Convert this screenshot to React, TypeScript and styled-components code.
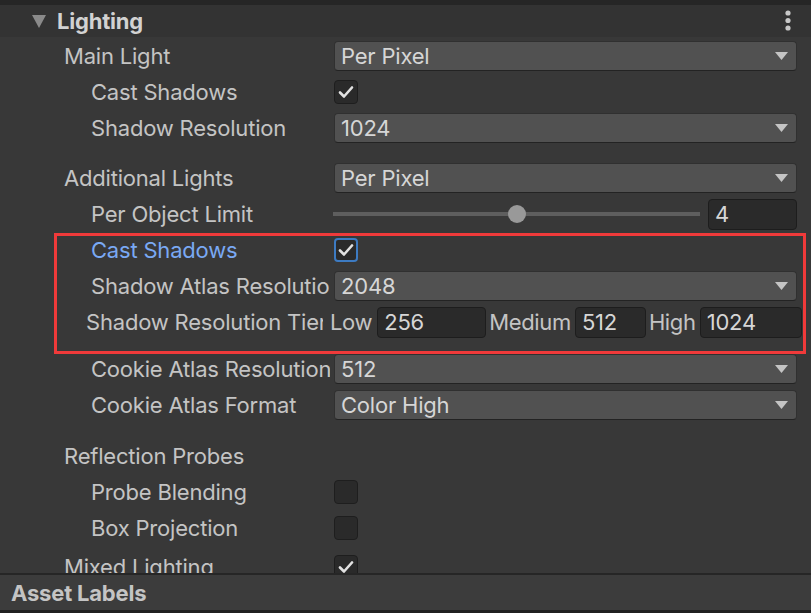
import styled, { createGlobalStyle } from 'styled-components';

const GlobalStyle = createGlobalStyle`
  html, body {
    margin: 0;
    padding: 0;
    background: #383838;
  }
  body {
    font-family: Inter, 'Noto Sans', sans-serif;
    letter-spacing: -0.2px;
    color: #c4c4c4;
  }
  * {
    box-sizing: border-box;
  }
`;

const Inspector = styled.div`
  width: 811px;
  height: 613px;
  display: flex;
  flex-direction: column;
  overflow: hidden;
  background: #383838;
`;

const TopBand = styled.div`
  height: 5px;
  flex-shrink: 0;
  background: #262626;
`;

const Header = styled.div`
  height: 32px;
  flex-shrink: 0;
  display: flex;
  align-items: center;
  gap: 11px;
  padding: 0 20px 0 32px;
  background: #333333;
`;

const HeaderTitle = styled.div`
  flex: 1;
  font-size: 22px;
  font-weight: 700;
  color: #d2d2d2;
`;

const Body = styled.div`
  flex: 1;
  overflow: hidden;
  padding-top: 1px;
`;

const Row = styled.div`
  display: grid;
  grid-template-columns: 330px 1fr;
  column-gap: 4px;
  align-items: center;
  height: 36px;
  padding-right: 14px;
`;

const Label = styled.div<{ $indent: number; $active?: boolean }>`
  padding-left: ${(p) => p.$indent}px;
  font-size: 22px;
  white-space: nowrap;
  overflow: hidden;
  color: ${(p) => (p.$active ? '#7aa9f4' : '#c4c4c4')};
`;

const Spacer = styled.div<{ $h: number }>`
  height: ${(p) => p.$h}px;
`;

const Dropdown = styled.div`
  height: 30px;
  display: flex;
  align-items: center;
  justify-content: space-between;
  padding: 0 8px 0 6px;
  background: #515151;
  border: 1px solid #303030;
  border-bottom-color: #232323;
  border-radius: 4px;
  font-size: 22px;
  color: #d6d6d6;
`;

const CheckBox = styled.div<{ $focused?: boolean }>`
  width: 24px;
  height: 24px;
  display: flex;
  align-items: center;
  justify-content: center;
  background: #2a2a2a;
  border: ${(p) => (p.$focused ? '2px solid #3d7bc2' : '1px solid #1e1e1e')};
  border-radius: 4px;
`;

const SliderField = styled.div`
  display: flex;
  align-items: center;
  gap: 8px;
  margin-left: -1px;
`;

const Track = styled.div`
  position: relative;
  flex: 1;
  height: 4px;
  background: #5e5e5e;
`;

const Thumb = styled.div`
  position: absolute;
  top: -7px;
  width: 18px;
  height: 18px;
  border-radius: 50%;
  background: #999999;
`;

const NumberField = styled.div<{ $w?: number }>`
  ${(p) => (p.$w ? `width: ${p.$w}px; flex-shrink: 0;` : 'flex: 1;')}
  height: 31px;
  display: flex;
  align-items: center;
  padding-left: 6px;
  background: #2a2a2a;
  border: 1px solid #1d1d1d;
  border-radius: 4px;
  font-size: 22px;
  color: #d6d6d6;
`;

const TierRow = styled.div`
  display: flex;
  align-items: center;
  height: 36px;
  padding: 0 9px 0 86px;
`;

const TierLabel = styled.div`
  width: 237px;
  flex-shrink: 0;
  font-size: 22px;
  white-space: nowrap;
  overflow: hidden;
`;

const MiniLabel = styled.div<{ $left: number; $right: number }>`
  flex-shrink: 0;
  margin: 0 ${(p) => p.$right}px 0 ${(p) => p.$left}px;
  font-size: 22px;
  letter-spacing: -0.35px;
  white-space: nowrap;
`;

const Highlight = styled.div`
  position: relative;
  padding-bottom: 11px;

  &::after {
    content: '';
    position: absolute;
    left: 54px;
    right: 5px;
    top: 1px;
    bottom: -3px;
    border: 3px solid #f03a3a;
    pointer-events: none;
  }
`;

const Footer = styled.div`
  height: 40px;
  flex-shrink: 0;
  display: flex;
  align-items: center;
  padding-left: 11px;
  background: #3c3c3c;
  border-top: 2px solid #262626;
  border-bottom: 3px solid #202020;
  font-size: 22px;
  font-weight: 700;
  color: #c4c4c4;
`;

const Arrow = () => (
  <svg width="13" height="8" viewBox="0 0 13 8">
    <polygon points="0,0 13,0 6.5,8" fill="#c4c4c4" />
  </svg>
);

const Check = () => (
  <svg width="16" height="14" viewBox="0 0 16 14">
    <polyline
      points="2,7.5 6,11.5 14,2.5"
      fill="none"
      stroke="#e2e2e2"
      strokeWidth="2.6"
      strokeLinecap="round"
      strokeLinejoin="round"
    />
  </svg>
);

const FoldTriangle = () => (
  <svg width="14" height="14" viewBox="0 0 14 14">
    <polygon points="0,1 14,1 7,14" fill="#8a8a8a" />
  </svg>
);

const MenuDots = () => (
  <svg width="6" height="22" viewBox="0 0 6 22">
    <circle cx="3" cy="3" r="2.6" fill="#c8c8c8" />
    <circle cx="3" cy="10.5" r="2.6" fill="#c8c8c8" />
    <circle cx="3" cy="18" r="2.6" fill="#c8c8c8" />
  </svg>
);

const Select = ({ value }: { value: string }) => (
  <Dropdown>
    <span>{value}</span>
    <Arrow />
  </Dropdown>
);

const Toggle = ({ on, focused }: { on: boolean; focused?: boolean }) => (
  <div>
    <CheckBox $focused={focused}>{on && <Check />}</CheckBox>
  </div>
);

const objectLimit = { value: 4, min: 0, max: 8 };

export default function App() {
  const pct = ((objectLimit.value - objectLimit.min) / (objectLimit.max - objectLimit.min)) * 100;

  return (
    <>
      <GlobalStyle />
      <Inspector>
        <TopBand />
        <Header>
          <FoldTriangle />
          <HeaderTitle>Lighting</HeaderTitle>
          <MenuDots />
        </Header>
        <Body>
          <Row>
            <Label $indent={64}>Main Light</Label>
            <Select value="Per Pixel" />
          </Row>
          <Row>
            <Label $indent={91}>Cast Shadows</Label>
            <Toggle on />
          </Row>
          <Row>
            <Label $indent={91}>Shadow Resolution</Label>
            <Select value="1024" />
          </Row>
          <Spacer $h={14} />
          <Row>
            <Label $indent={64}>Additional Lights</Label>
            <Select value="Per Pixel" />
          </Row>
          <Row>
            <Label $indent={91}>Per Object Limit</Label>
            <SliderField>
              <Track>
                <Thumb style={{ left: `calc(${pct}% - 9px)` }} />
              </Track>
              <NumberField $w={89}>{objectLimit.value}</NumberField>
            </SliderField>
          </Row>
          <Highlight>
            <Row>
              <Label $indent={91} $active>
                Cast Shadows
              </Label>
              <Toggle on focused />
            </Row>
            <Row>
              <Label $indent={91}>Shadow Atlas Resolution</Label>
              <Select value="2048" />
            </Row>
            <TierRow>
              <TierLabel>Shadow Resolution Tiers</TierLabel>
              <MiniLabel $left={7} $right={5}>
                Low
              </MiniLabel>
              <NumberField $w={109}>256</NumberField>
              <MiniLabel $left={3} $right={4}>
                Medium
              </MiniLabel>
              <NumberField $w={71}>512</NumberField>
              <MiniLabel $left={3} $right={4}>
                High
              </MiniLabel>
              <NumberField>1024</NumberField>
            </TierRow>
          </Highlight>
          <Row>
            <Label $indent={91}>Cookie Atlas Resolution</Label>
            <Select value="512" />
          </Row>
          <Row>
            <Label $indent={91}>Cookie Atlas Format</Label>
            <Select value="Color High" />
          </Row>
          <Spacer $h={15} />
          <Row>
            <Label $indent={64}>Reflection Probes</Label>
            <div />
          </Row>
          <Row>
            <Label $indent={91}>Probe Blending</Label>
            <Toggle on={false} />
          </Row>
          <Row>
            <Label $indent={91}>Box Projection</Label>
            <Toggle on={false} />
          </Row>
          <Spacer $h={3} />
          <Row>
            <Label $indent={64}>Mixed Lighting</Label>
            <Toggle on />
          </Row>
        </Body>
        <Footer>Asset Labels</Footer>
      </Inspector>
    </>
  );
}
